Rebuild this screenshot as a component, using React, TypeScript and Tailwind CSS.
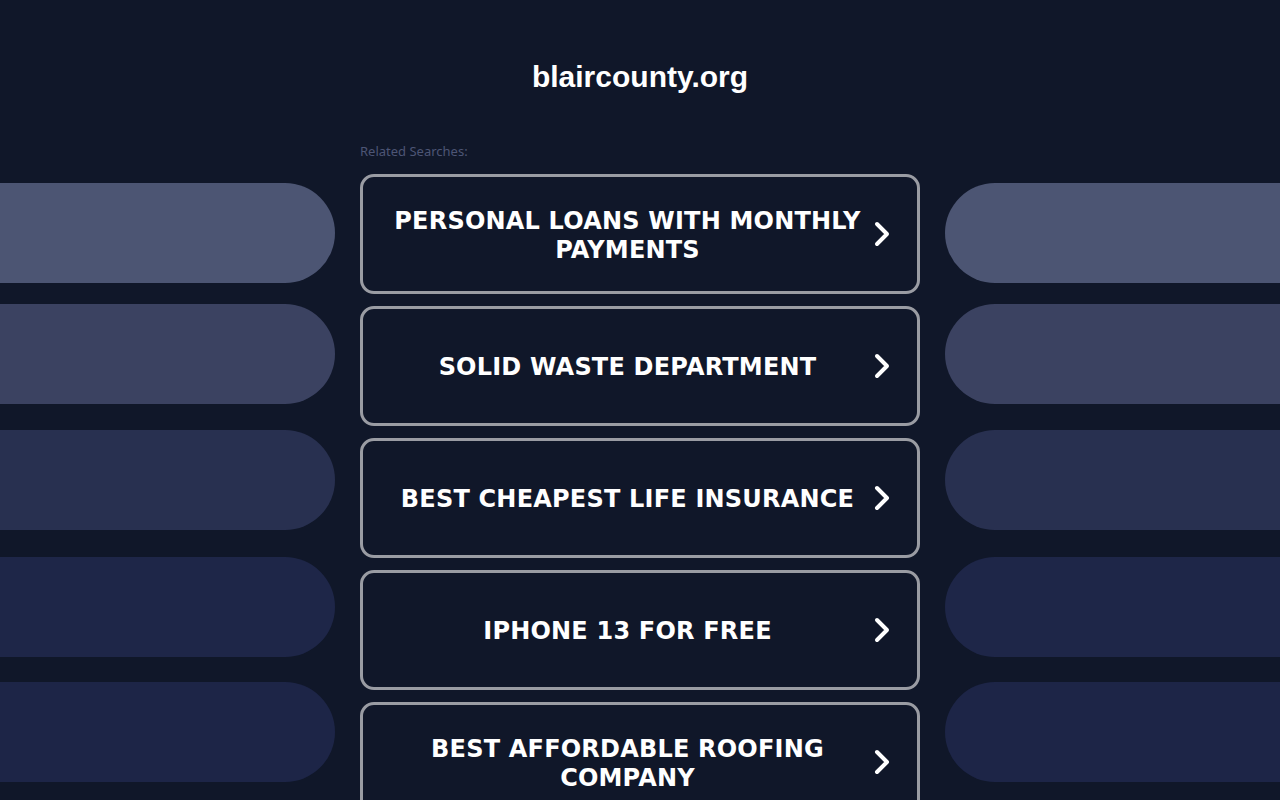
import React from "react";

const items = [
  "PERSONAL LOANS WITH MONTHLY PAYMENTS",
  "SOLID WASTE DEPARTMENT",
  "BEST CHEAPEST LIFE INSURANCE",
  "IPHONE 13 FOR FREE",
  "BEST AFFORDABLE ROOFING COMPANY",
];

const pills = [
  "mt-0 bg-[#4c5573]",
  "mt-[21px] bg-[#3b4261]",
  "mt-[26px] bg-[#283050]",
  "mt-[27px] bg-[#1e2648]",
  "mt-[25px] bg-[#1d2547]",
];

function Chevron() {
  return (
    <svg width="20" height="28" viewBox="0 0 20 28" className="shrink-0 mr-[25px]">
      <path d="M5 4 L15 14 L5 24" fill="none" stroke="#ffffff" strokeWidth="4" strokeLinecap="round" strokeLinejoin="round" />
    </svg>
  );
}

export default function App() {
  return (
    <div className="w-[1280px] h-[800px] overflow-hidden bg-[#101729] flex gap-[25px]">
      <div className="w-[335px] shrink-0 pt-[183px] flex flex-col">
        {pills.map((c, i) => (
          <div key={i} className={`h-[100px] shrink-0 rounded-r-[50px] ${c}`} />
        ))}
      </div>
      <div className="w-[560px] shrink-0 flex flex-col">
        <div className="h-[143px] shrink-0 pt-[59px] text-center">
          <h1 className="text-[30px] leading-[36px] font-bold text-white" style={{ fontFamily: '"Liberation Sans", Arial, sans-serif' }}>
            blaircounty.org
          </h1>
        </div>
        <div className="shrink-0 text-[13px] leading-[16px] text-[#4d5575] mb-[15px]" style={{ fontFamily: '"Noto Sans", "Open Sans", sans-serif' }}>
          Related Searches:
        </div>
        <div className="flex flex-col gap-[12px] shrink-0">
          {items.map((t) => (
            <div key={t} className="h-[120px] shrink-0 rounded-[14px] border-[3px] border-[#9a9ca3] flex items-center">
              <div className="flex-1 pl-[20px] pt-[3px] text-center text-white font-bold text-[24px] leading-[29px] tracking-[0.2px]" style={{ fontFamily: '"DejaVu Sans", Verdana, sans-serif' }}>
                {t}
              </div>
              <Chevron />
            </div>
          ))}
        </div>
      </div>
      <div className="w-[335px] shrink-0 pt-[183px] flex flex-col">
        {pills.map((c, i) => (
          <div key={i} className={`h-[100px] shrink-0 rounded-l-[50px] ${c}`} />
        ))}
      </div>
    </div>
  );
}
